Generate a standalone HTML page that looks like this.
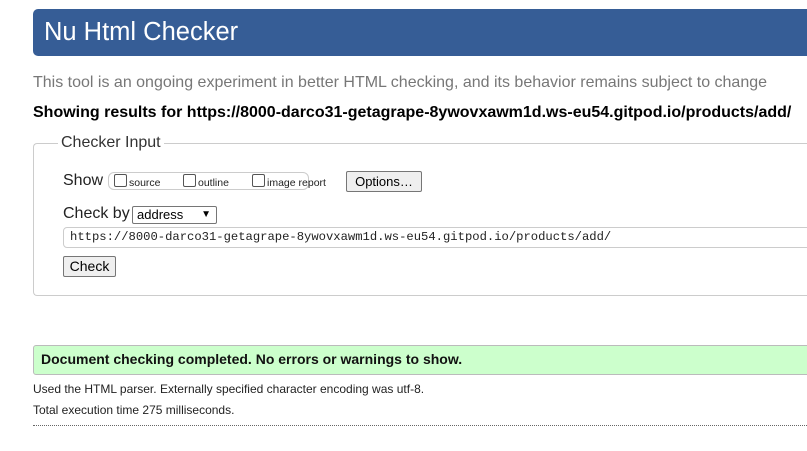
<!DOCTYPE html>
<html><head><style>
body{margin:0;width:807px;height:451px;overflow:hidden;background:#fff;font-family:"Liberation Sans",Arial,sans-serif;position:relative}
.a{position:absolute;white-space:nowrap}
.hdr{left:33px;top:9px;width:800px;height:47px;background:#365d96;border-radius:5px 0 0 5px}
.cb{display:inline-block;width:11px;height:11px;border:1px solid #555;border-radius:2px;vertical-align:-1px;margin-right:2px;background:#fff}
.btn{background:#efefef;border:1px solid #767676;border-radius:2px;font-size:13px;color:#000}
</style></head><body>
<div class="a hdr"></div>
<div class="a" style="left:44px;top:18px;font-size:25.5px;color:#fff">Nu Html Checker</div>
<div class="a" style="left:33px;top:74px;font-size:16px;color:#777">This tool is an ongoing experiment in better HTML checking, and its behavior remains subject to change</div>
<div class="a" style="left:33px;top:104px;font-size:16px;font-weight:bold;color:#000">Showing results for https://8000-darco31-getagrape-8ywovxawm1d.ws-eu54.gitpod.io/products/add/</div>
<div class="a" style="left:33px;top:143px;width:800px;height:151px;border:1px solid #ccc;border-right:none;border-radius:4px 0 0 4px"></div>
<div class="a" style="left:58px;top:134px;background:#fff;padding:0 3px;font-size:16px;color:#333">Checker Input</div>
<div class="a" style="left:63px;top:172px;font-size:16px;color:#222">Show</div>
<div class="a" style="left:108px;top:172px;width:199px;height:16px;border:1px solid #ccc;border-radius:6px"></div>
<div class="a" style="left:114px;top:174px;font-size:10.5px;color:#222"><span class="cb"></span>source</div>
<div class="a" style="left:183px;top:174px;font-size:10.5px;color:#222"><span class="cb"></span>outline</div>
<div class="a" style="left:252px;top:174px;font-size:10.5px;color:#222"><span class="cb"></span>image report</div>
<div class="a btn" style="left:346px;top:171px;width:74px;height:19px;line-height:19px;text-align:center">Options…</div>
<div class="a" style="left:63px;top:205px;font-size:16px;color:#222">Check by</div>
<div class="a" style="left:132px;top:206px;width:79px;height:16px;border:1px solid #767676;border-radius:2px;font-size:13px;line-height:16px;padding-left:4px;box-sizing:content-box">address<span style="position:absolute;right:5px;top:0;font-size:10px">&#9660;</span></div>
<div class="a" style="left:63px;top:227px;width:760px;height:19px;border:1px solid #ccc;border-radius:4px;font-family:'Liberation Mono',monospace;font-size:12.2px;line-height:19px;padding-left:6px;color:#222">https://8000-darco31-getagrape-8ywovxawm1d.ws-eu54.gitpod.io/products/add/</div>
<div class="a btn" style="left:63px;top:256px;width:51px;height:19px;line-height:19px;text-align:center;font-size:14px">Check</div>
<div class="a" style="left:33px;top:345px;width:790px;height:28px;background:#ccffcc;border:1px solid #bbb;border-radius:3px 0 0 3px"></div>
<div class="a" style="left:41px;top:351px;font-size:14px;font-weight:bold;color:#111">Document checking completed. No errors or warnings to show.</div>
<div class="a" style="left:33px;top:382px;font-size:12px;color:#222">Used the HTML parser. Externally specified character encoding was utf-8.</div>
<div class="a" style="left:33px;top:403px;font-size:12px;color:#222">Total execution time 275 milliseconds.</div>
<div class="a" style="left:33px;top:425px;width:780px;border-top:1px dotted #666"></div>
</body></html>
